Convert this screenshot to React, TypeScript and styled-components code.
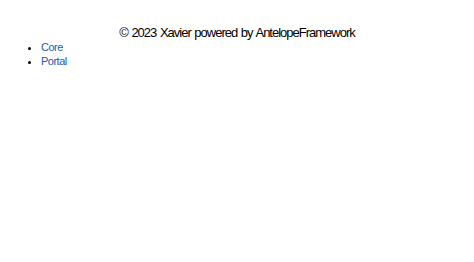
import { FC } from 'react'
import styled, { createGlobalStyle } from 'styled-components'

const GlobalStyle = createGlobalStyle`
    html, body {
        margin: 0;
        padding: 0;
        background: #ffffff;
        font-family: "Liberation Sans", Arial, sans-serif;
    }
`;

const Page = styled.div`
    display: flex;
    flex-direction: column;
    padding: 25px 0 0 0;
`;

const Credits = styled.p`
    margin: 0;
    text-align: center;
    font-size: 13px;
    line-height: 16px;
    letter-spacing: -1px;
    word-spacing: 1px;
    color: #000000;
`;

const LinkList = styled.ul`
    margin: 0;
    padding: 0 0 0 41px;
    font-size: 11px;
    line-height: 13.5px;
    letter-spacing: -0.5px;
`;

const LinkItem = styled.li`
    color: #000000;
`;

const Link = styled.a`
    color: #1e58b0;
    text-decoration: none;
`;

const links = ['Core', 'Portal'];

const App: FC = () => {
    return (
        <>
            <GlobalStyle />
            <Page>
                <Credits>© 2023 Xavier powered by AntelopeFramework</Credits>
                <LinkList>
                    {links.map((label) => (
                        <LinkItem key={label}>
                            <Link href="#">{label}</Link>
                        </LinkItem>
                    ))}
                </LinkList>
            </Page>
        </>
    );
}

export default App;
